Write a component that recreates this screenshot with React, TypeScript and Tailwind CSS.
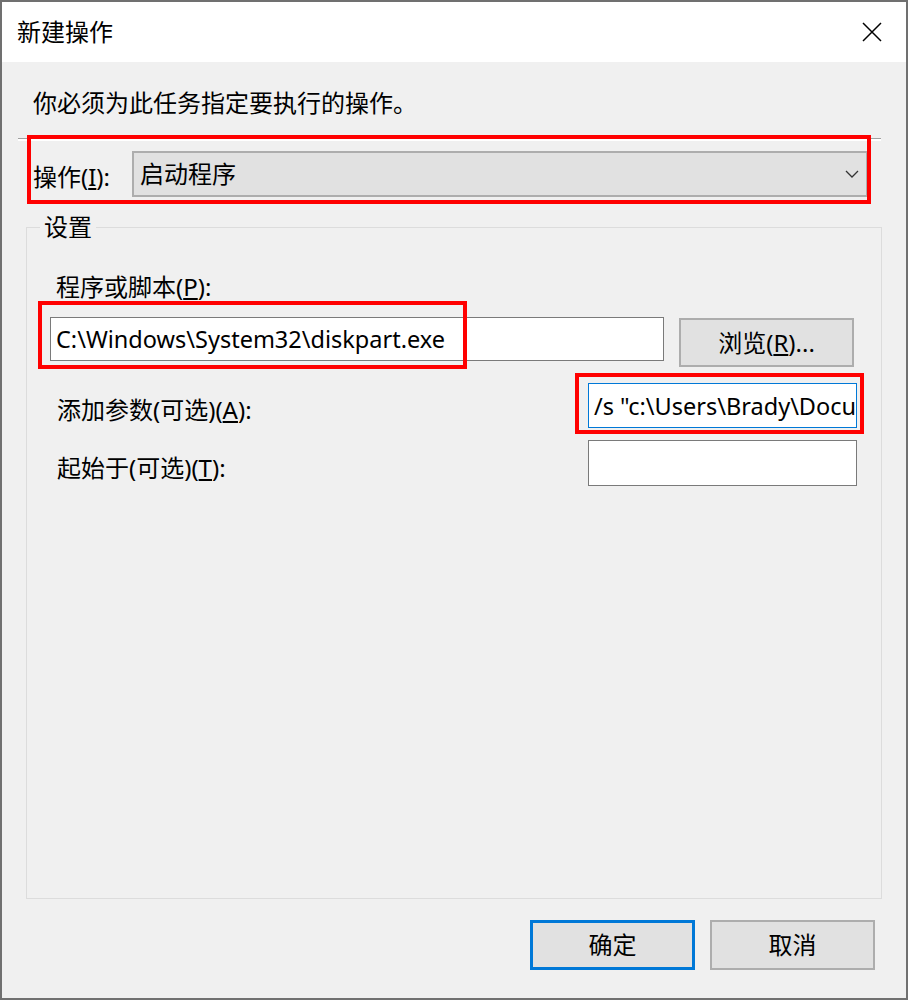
export default function App() {
  return (
    <div className="relative flex h-[1000px] w-[908px] flex-col border-2 border-[#707070] bg-[#f0f0f0] font-['Noto_Sans','Noto_Sans_CJK_SC',sans-serif] text-[24px] leading-[30px] text-black">
      {/* title bar */}
      <div className="flex h-[60px] shrink-0 items-center justify-between bg-white">
        <span className="pl-[15px]">新建操作</span>
        <div className="flex h-full w-[68px] items-center justify-center">
          <svg width="20" height="20" viewBox="0 0 20 20">
            <path d="M1 1L19 19M19 1L1 19" stroke="#000" strokeWidth="1.5" />
          </svg>
        </div>
      </div>

      <div className="flex flex-1 flex-col">
        <p className="pl-[31px] pt-[26px]">你必须为此任务指定要执行的操作。</p>
        <div className="ml-[16px] mr-[25px] mt-[20px] border-b-2 border-t border-b-white border-t-[#a0a0a0]" />

        <div className="mt-[10px] flex h-[46px] items-center pl-[31px]">
          <span className="mt-[5px] w-[99px]">
            操作(<u>I</u>):
          </span>
          <div className="flex h-full w-[736px] items-center justify-between border-2 border-[#adadad] bg-[#e1e1e1] pl-[6px] pr-[7px]">
            <span>启动程序</span>
            <svg width="14" height="8" viewBox="0 0 14 8">
              <path d="M1 1L7 7L13 1" fill="none" stroke="#333" strokeWidth="1.3" />
            </svg>
          </div>
        </div>

        <fieldset className="mx-[24px] mt-[15px] flex-1 border border-[#dcdcdc]">
          <legend className="ml-[13px] px-[4px] leading-[30px]">设置</legend>
          <p className="mt-[30px] pl-[29px]">
            程序或脚本(<u>P</u>):
          </p>
          <div className="mt-[15px] flex items-start gap-[15px] pl-[23px]">
            <div className="flex h-[44px] w-[614px] items-center border border-[#7a7a7a] bg-white pl-[5px] text-[23.5px]">
              C:\Windows\System32\diskpart.exe
            </div>
            <div className="mt-[1px] flex h-[49px] w-[175px] items-center justify-center border-2 border-[#adadad] bg-[#e1e1e1]">
              <span>
                浏览(<u>R</u>)...
              </span>
            </div>
          </div>
          <div className="mt-[16px] flex items-center justify-between pl-[30px] pr-[24px]">
            <span className="mt-[9px]">
              添加参数(可选)(<u>A</u>):
            </span>
            <div className="flex h-[45px] w-[269px] items-center overflow-hidden whitespace-nowrap border border-[#0078d7] bg-white pl-[5px] text-[23.5px]">
              /s "c:\Users\Brady\Documents\diskpart.txt"
            </div>
          </div>
          <div className="mt-[12px] flex items-center justify-between pl-[30px] pr-[24px]">
            <span className="mt-[9px]">
              起始于(可选)(<u>T</u>):
            </span>
            <div className="h-[46px] w-[269px] border border-[#7a7a7a] bg-white" />
          </div>
        </fieldset>

        <div className="mb-[28px] mt-[21px] flex justify-end gap-[15px] pr-[31px]">
          <div className="flex h-[50px] w-[165px] items-center justify-center border-[3px] border-[#0078d7] bg-[#e1e1e1]">
            确定
          </div>
          <div className="flex h-[50px] w-[165px] items-center justify-center border-2 border-[#adadad] bg-[#e1e1e1]">
            取消
          </div>
        </div>
      </div>

      {/* red annotation boxes */}
      <div className="absolute left-[25px] top-[133px] h-[69px] w-[844px] border-4 border-[#ff0000]" />
      <div className="absolute left-[36px] top-[299px] h-[68px] w-[429px] border-4 border-[#ff0000]" />
      <div className="absolute left-[573px] top-[371px] h-[61px] w-[289px] border-4 border-[#ff0000]" />
    </div>
  );
}
